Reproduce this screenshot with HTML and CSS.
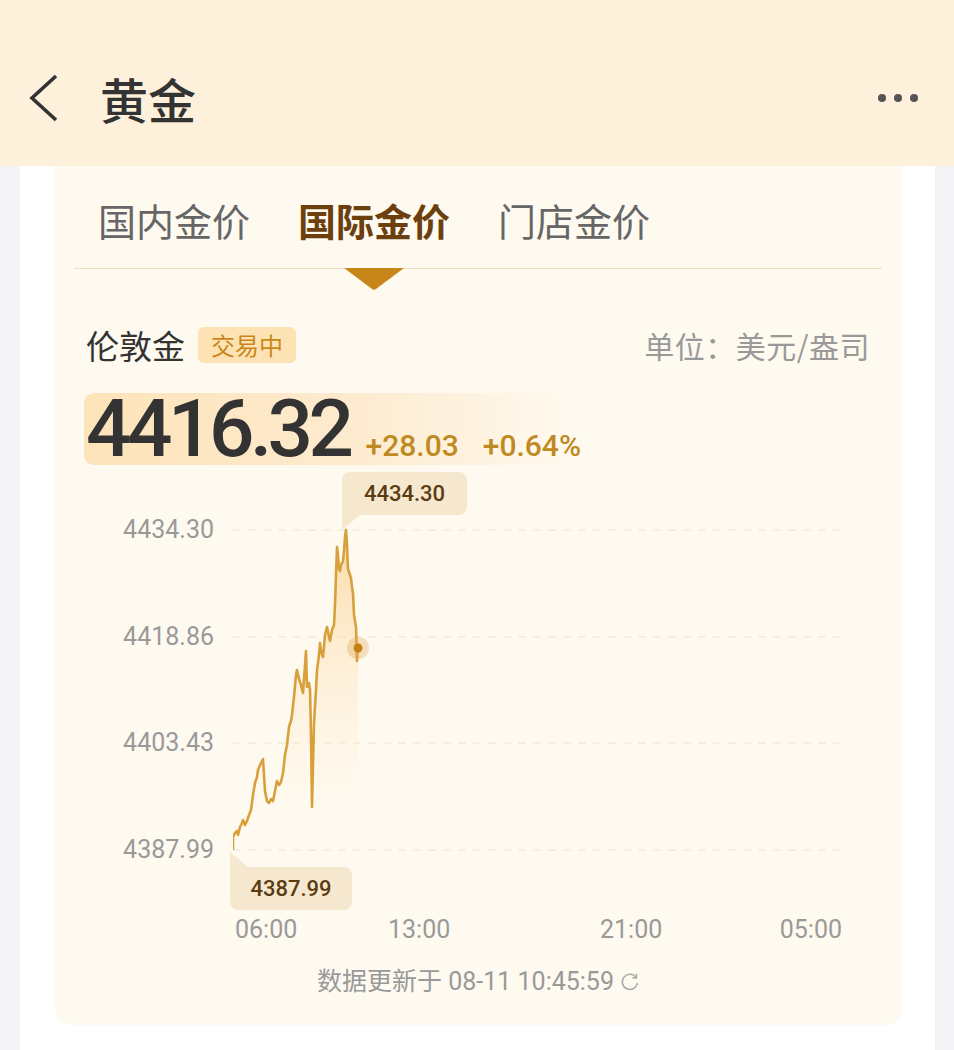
FILE: index.html
```html
<!DOCTYPE html>
<html lang="zh">

<head>
    <meta charset="UTF-8">
    <title>黄金</title>
    <link rel="stylesheet" href="styles.css">
</head>

<body>
    <header class="topbar">
        <svg class="back" width="32" height="50" viewBox="0 0 32 50">
            <polyline points="28,3 4,25 28,47" fill="none" stroke="#333" stroke-width="3.6" stroke-linejoin="miter" />
        </svg>
        <h1>黄金</h1>
        <svg class="more" width="40" height="10" viewBox="0 0 40 10">
            <circle cx="4" cy="5" r="4" fill="#555" />
            <circle cx="20" cy="5" r="4" fill="#555" />
            <circle cx="36" cy="5" r="4" fill="#555" />
        </svg>
    </header>

    <div class="sheet">
        <section class="card">
            <nav class="tabs">
                <span class="tab">国内金价</span>
                <span class="tab active">国际金价</span>
                <span class="tab">门店金价</span>
            </nav>

            <div class="info">
                <div class="name">伦敦金 <span class="badge">交易中</span></div>
                <div class="unit">单位：美元/盎司</div>
            </div>

            <div class="price">
                <span class="now">4416.32</span>
                <span class="diff">+28.03</span>
                <span class="diff">+0.64%</span>
            </div>

            <div class="chart">
                <div class="yaxis">
                    <span>4434.30</span>
                    <span>4418.86</span>
                    <span>4403.43</span>
                    <span>4387.99</span>
                </div>
                <svg class="plot" width="609" height="450" viewBox="0 0 609 450">
                    <defs>
                        <linearGradient id="fill" x1="0" y1="65" x2="0" y2="350" gradientUnits="userSpaceOnUse">
                            <stop offset="0" stop-color="#f7c779" stop-opacity="0.6" />
                            <stop offset="1" stop-color="#fde8c8" stop-opacity="0" />
                        </linearGradient>
                    </defs>
                    <g stroke="#ece3d2" stroke-width="1.2" stroke-dasharray="8 7">
                        <line x1="0" y1="65" x2="609" y2="65" />
                        <line x1="0" y1="172" x2="609" y2="172" />
                        <line x1="0" y1="278" x2="609" y2="278" />
                        <line x1="0" y1="385" x2="609" y2="385" />
                    </g>
                    <path fill="url(#fill)"
                        d="M0,385 L0,372 L2,368 L4,366 L5,370 L7,362 L9,358 L10,355 L12,360 L14,356 L16,350 L18,345 L20,330 L22,318 L24,312 L25,305 L27,300 L29,296 L30,294 L31,310 L32,326 L34,336 L36,338 L38,334 L40,336 L42,326 L44,316 L46,320 L48,317 L50,308 L52,290 L54,280 L56,262 L58,256 L59,250 L61,232 L63,210 L64,205 L66,214 L68,220 L70,228 L72,200 L73,186 L74,222 L76,218 L77,224 L78,270 L79,342 L80,300 L81,258 L83,225 L84,205 L86,190 L87,178 L88,186 L90,192 L92,170 L94,162 L96,172 L97,176 L99,165 L101,160 L102,140 L103,110 L104,82 L105,90 L106,104 L107,106 L108,100 L110,96 L111,86 L112,72 L113,65 L114,80 L115,104 L117,110 L118,113 L119,122 L120,128 L121,150 L123,162 L124,196 L125,183 L125,350 L0,350 Z" />
                    <path fill="none" stroke="#d8a03a" stroke-width="2.6" stroke-linejoin="round"
                        d="M0,385 L0,372 L2,368 L4,366 L5,370 L7,362 L9,358 L10,355 L12,360 L14,356 L16,350 L18,345 L20,330 L22,318 L24,312 L25,305 L27,300 L29,296 L30,294 L31,310 L32,326 L34,336 L36,338 L38,334 L40,336 L42,326 L44,316 L46,320 L48,317 L50,308 L52,290 L54,280 L56,262 L58,256 L59,250 L61,232 L63,210 L64,205 L66,214 L68,220 L70,228 L72,200 L73,186 L74,222 L76,218 L77,224 L78,270 L79,342 L80,300 L81,258 L83,225 L84,205 L86,190 L87,178 L88,186 L90,192 L92,170 L94,162 L96,172 L97,176 L99,165 L101,160 L102,140 L103,110 L104,82 L105,90 L106,104 L107,106 L108,100 L110,96 L111,86 L112,72 L113,65 L114,80 L115,104 L117,110 L118,113 L119,122 L120,128 L121,150 L123,162 L124,196 L125,183" />
                    <circle cx="125" cy="183" r="11" fill="#dca655" fill-opacity="0.35" />
                    <circle cx="125" cy="183" r="4.5" fill="#c47f12" />
                </svg>

                <div class="tip tip-high">4434.30</div>
                <div class="tip tip-low">4387.99</div>
            </div>

            <div class="xaxis">
                <span>06:00</span>
                <span>13:00</span>
                <span>21:00</span>
                <span>05:00</span>
            </div>

            <div class="update">
                数据更新于 08-11 10:45:59
                <svg width="20" height="20" viewBox="0 0 20 20">
                    <path d="M16.2 5.6 A7.6 7.6 0 1 0 17.4 11" fill="none" stroke="#aaa" stroke-width="1.5" />
                    <polyline points="16.6,1.8 16.4,6 12.4,5.7" fill="none" stroke="#aaa" stroke-width="1.5" />
                </svg>
            </div>
        </section>
    </div>
</body>

</html>
```

FILE: styles.css
```css
* {
    padding: 0;
    margin: 0;
    box-sizing: border-box;
}

body {
    width: 954px;
    height: 1050px;
    overflow: hidden;
    background: #f4f4f6;
    font-family: Roboto, "Noto Sans CJK SC", sans-serif;
    color: #333;
}

/* 顶部栏 */
.topbar {
    height: 166px;
    background: #fef1dc;
    display: flex;
    align-items: center;
    padding: 30px 36px 0 28px;
}

.topbar h1 {
    margin-left: 40px;
    font-size: 48px;
    font-weight: 500;
    color: #333;
    font-family: "Noto Sans CJK SC", sans-serif;
}

.more {
    margin-left: auto;
}

.sheet {
    margin: 0 19px 0 20px;
    height: 884px;
    background: #fff;
    padding: 0 33px 0 35px;
}

.card {
    background: #fffaf0;
    border-radius: 0 0 16px 16px;
    padding-bottom: 28px;
}

/* 标签 */
.tabs {
    margin: 0 20px 0 19px;
    padding: 30px 0 24px 24px;
    display: flex;
    gap: 48px;
    border-bottom: 1px solid #ebdfc5;
    font-family: "Noto Sans CJK SC", sans-serif;
    font-size: 38px;
    line-height: 48px;
    color: #666;
}

.tab {
    position: relative;
}

.tab.active {
    color: #6b3f0e;
    font-weight: 700;
}

.tab.active::after {
    content: "";
    position: absolute;
    left: 50%;
    top: calc(100% + 24px);
    margin-left: -30px;
    width: 60px;
    height: 22px;
    background: #c8861a;
    clip-path: polygon(0 0, 100% 0, 55% 92%, 50% 100%, 45% 92%);
}

.info {
    display: flex;
    align-items: center;
    justify-content: space-between;
    padding: 52px 32px 0 31px;
    height: 100px;
    font-family: "Noto Sans CJK SC", sans-serif;
}

.name {
    display: flex;
    align-items: center;
    font-size: 33px;
    line-height: 48px;
    color: #333;
}

.badge {
    margin-left: 13px;
    background: #fde3b4;
    color: #c9871a;
    font-size: 24px;
    line-height: 36px;
    padding: 0 13px;
    border-radius: 6px;
}

.unit {
    font-size: 30px;
    letter-spacing: 0.5px;
    color: #999;
}

/* 价格 */
.price {
    margin: 24px 0 0 29px;
    width: 496px;
    height: 72px;
    border-radius: 10px;
    background: linear-gradient(90deg, #fde3b9, #fdebcf 55%, rgba(255, 250, 240, 0));
    display: flex;
    align-items: baseline;
    padding-left: 2px;
}

.now {
    font-size: 80px;
    font-weight: 500;
    letter-spacing: -4.5px;
    line-height: 72px;
    color: #333;
}

.diff {
    margin-left: 16px;
    font-size: 30px;
    font-weight: 500;
    color: #c08a22;
}

.diff + .diff {
    margin-left: 24px;
}

/* 走势图 */
.chart {
    position: relative;
    height: 450px;
    display: flex;
    gap: 19px;
}

.yaxis {
    width: 159px;
    height: 350px;
    margin-top: 50px;
    display: flex;
    flex-direction: column;
    justify-content: space-between;
    align-items: flex-end;
    font-size: 25px;
    line-height: 30px;
    color: #999;
}

.tip {
    position: absolute;
    height: 43px;
    line-height: 43px;
    background: #f5e8cf;
    border-radius: 8px;
    color: #5c3b12;
    font-size: 22px;
    font-weight: 500;
    text-align: center;
}

.tip::before {
    content: "";
    position: absolute;
    left: 0;
    width: 0;
    height: 0;
    border-left: 18px solid #f5e8cf;
}

.tip-high {
    left: 287px;
    top: 7px;
    width: 125px;
    border-bottom-left-radius: 0;
}

.tip-high::before {
    top: 100%;
    border-bottom: 15px solid transparent;
}

.tip-low {
    left: 175px;
    top: 402px;
    width: 122px;
    border-top-left-radius: 0;
}

.tip-low::before {
    bottom: 100%;
    border-top: 15px solid transparent;
}

.xaxis {
    display: grid;
    grid-template-columns: 153px 212px 177px auto;
    padding-left: 180px;
    width: 787px;
    font-size: 25px;
    line-height: 30px;
    color: #999;
}

.xaxis span:last-child {
    text-align: right;
}

.update {
    margin-top: 22px;
    display: flex;
    justify-content: center;
    align-items: center;
    gap: 6px;
    font-size: 25px;
    line-height: 30px;
    color: #999;
}
```
